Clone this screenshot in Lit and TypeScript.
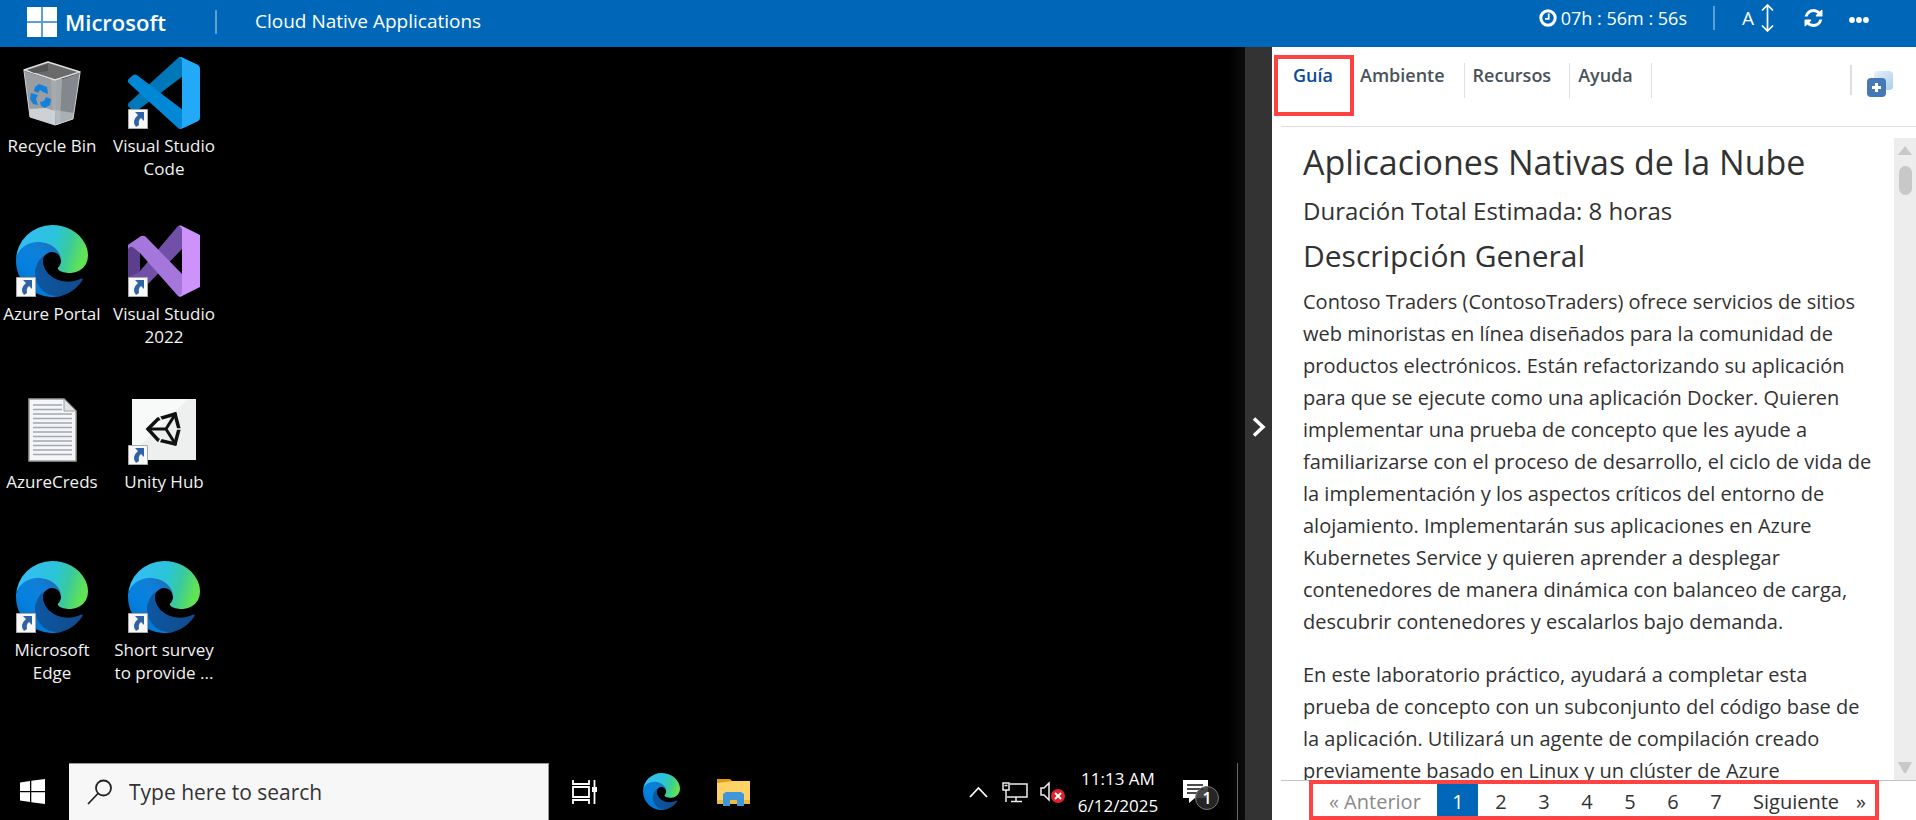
import { LitElement, html, css, svg, nothing } from "lit";
import { customElement, property, state } from "lit/decorators.js";
import { classMap } from "lit/directives/class-map.js";

const FONT = css`"Open Sans", "Noto Sans", sans-serif`;

@customElement("edge-logo")
class EdgeLogo extends LitElement {
  static styles = css`
    :host { display: block; }
    svg { display: block; width: 100%; height: 100%; }
  `;
  render() {
    return html`<svg viewBox="0 0 256 256" preserveAspectRatio="none" aria-hidden="true">
      <defs>
        <linearGradient id="navy" x1="63" y1="178" x2="241" y2="178" gradientUnits="userSpaceOnUse">
          <stop offset="0" stop-color="#0c59a4" /><stop offset="1" stop-color="#114a8b" />
        </linearGradient>
        <linearGradient id="blue" x1="157" y1="95" x2="46" y2="217" gradientUnits="userSpaceOnUse">
          <stop offset="0" stop-color="#1b6fc0" /><stop offset="0.25" stop-color="#0f7fd6" />
          <stop offset="0.7" stop-color="#0680e0" /><stop offset="1" stop-color="#0078d4" />
        </linearGradient>
        <linearGradient id="green" x1="20" y1="60" x2="240" y2="130" gradientUnits="userSpaceOnUse">
          <stop offset="0" stop-color="#35bdf6" /><stop offset="0.5" stop-color="#2ac4d8" />
          <stop offset="0.75" stop-color="#3acb9a" /><stop offset="1" stop-color="#62e352" />
        </linearGradient>
      </defs>
      <g transform="translate(-4.63 -4.92)">
        <path fill="url(#navy)" d="M235.68 195.46a93.73 93.73 0 0 1-10.54 4.71 101.87 101.87 0 0 1-35.9 6.46c-47.32 0-88.54-32.55-88.54-74.32A31.48 31.48 0 0 1 117.13 105c-42.8 1.8-53.8 46.4-53.8 72.53 0 73.88 68.09 81.37 82.76 81.37 7.91 0 19.84-2.3 27-4.56l1.31-.44a128.34 128.34 0 0 0 66.6-52.8 4 4 0 0 0-5.32-5.64Z" />
        <path fill="url(#blue)" d="M110.34 246.34A79.2 79.2 0 0 1 87.6 225a80.72 80.72 0 0 1 29.53-120c3.12-1.47 8.45-4.13 15.54-4a32.35 32.35 0 0 1 25.69 13 31.88 31.88 0 0 1 6.36 18.66c0-.21 24.46-79.6-80-79.6-43.9 0-80 41.66-80 78.21a130.15 130.15 0 0 0 12.11 56 128 128 0 0 0 156.38 67.11 75.55 75.55 0 0 1-62.78-8Z" />
        <path fill="url(#green)" d="M156.94 153.78c-.81 1.05-3.3 2.5-3.3 5.66 0 2.61 1.7 5.12 4.72 7.23 14.38 10 41.49 8.68 41.56 8.68a59.56 59.56 0 0 0 30.27-8.35 61.38 61.38 0 0 0 30.43-52.88c.26-22.41-8-37.31-11.34-43.91C228.09 28.76 182.35 4.92 132.61 4.92a128 128 0 0 0-128 126.2c.48-36.54 36.8-66.05 80-66.05 3.5 0 23.46.34 42 10.07 16.34 8.58 24.9 18.94 30.85 29.21 6.18 10.67 7.28 24.15 7.28 29.52s-2.74 13.33-7.8 19.91Z" />
      </g>
    </svg>`;
  }
}

@customElement("lab-header")
class LabHeader extends LitElement {
  static styles = css`
    :host {
      display: flex; align-items: flex-start; box-sizing: border-box; height: 47px;
      background: #0067b8; color: #fff; font-family: ${FONT};
    }
    svg { display: block; }
    button { display: block; border: 0; margin: 0; padding: 0; background: none; color: inherit; font: inherit; cursor: pointer; }
    .brand { display: flex; align-items: center; gap: 8px; margin: 7px 0 0 27px; height: 30px; width: 188px; }
    .wordmark { font-size: 22px; line-height: 30px; font-weight: 600; }
    .bar { width: 2px; height: 24px; background: #5c9fd2; margin-top: 10px; }
    .title { font-size: 19px; line-height: 42px; font-weight: 400; margin: 0 auto 0 38px; white-space: nowrap; }
    .tools { display: flex; align-items: center; height: 36px; padding-right: 47px; }
    .timer { display: flex; align-items: center; gap: 4px; font-size: 18px; white-space: nowrap; }
    .tools .bar { margin: 0 27px 0 26px; }
    .size { display: flex; align-items: center; gap: 7px; font-size: 19px; }
    .refresh { margin-left: 30px; }
    .more { margin: 4px 0 0 26px; }
  `;
  render() {
    return html`
      <div class="brand">
        <svg width="30" height="30" viewBox="0 0 30 30" aria-hidden="true">
          <path fill="#5c9fd2" d="M0 14h30v2H0zM14 0h2v30h-2z" />
          <path fill="#fff" d="M0 0h14v14H0zM16 0h14v14H16zM0 16h14v14H0zM16 16h14v14H16z" />
        </svg>
        <span class="wordmark">Microsoft</span>
      </div>
      <span class="bar"></span>
      <h1 class="title">Cloud Native Applications</h1>
      <div class="tools">
        <div class="timer">
          <svg width="18" height="18" viewBox="0 0 18 18" fill="none" stroke="#fff" aria-hidden="true">
            <circle cx="9" cy="9" r="7.2" stroke-width="3" /><path d="M9.7 4.5v5.3H6" stroke-width="1.8" />
          </svg>
          <span>07h : 56m : 56s</span>
        </div>
        <span class="bar"></span>
        <button class="size" aria-label="Tamaño del texto">
          <span>A</span>
          <svg width="13" height="28" viewBox="0 0 13 28" fill="none" stroke="#fff" stroke-width="1.7" aria-hidden="true">
            <path d="M6.5 1v26M1 6.5l5.5-5.5L12 6.5M1 21.5l5.5 5.5 5.5-5.5" />
          </svg>
        </button>
        <button class="refresh" aria-label="Actualizar">
          <svg width="19" height="18" viewBox="0 0 1536 1536" fill="#fff" aria-hidden="true">
            <path d="M1511 928q0 5-1 7-64 268-268 434.500T764 1536q-146 0-282.500-55T238 1324l-129 129q-19 19-45 19t-45-19-19-45V960q0-26 19-45t45-19h448q26 0 45 19t19 45-19 45l-137 137q71 66 161 102t187 36q134 0 250-65t186-179q11-17 53-117 8-23 30-23h192q13 0 22.500 9.500t9.500 22.500zm25-800v448q0 26-19 45t-45 19h-448q-26 0-45-19t-19-45 19-45l138-138Q969 256 768 256q-134 0-250 65T332 500q-11 17-53 117-8 23-30 23H50q-13 0-22.500-9.500T18 608v-7q65-268 270-434.500T768 0q146 0 284 55.500T1297 212l130-129q19-19 45-19t45 19 19 45z" />
          </svg>
        </button>
        <button class="more" aria-label="Más opciones">
          <svg width="20" height="6" viewBox="0 0 20 6" fill="#fff" aria-hidden="true">
            <circle cx="3" cy="3" r="2.9" /><circle cx="10" cy="3" r="2.9" /><circle cx="17" cy="3" r="2.9" />
          </svg>
        </button>
      </div>`;
  }
}

const recycleBin = svg`
  <path fill="#9a9da2" d="M8 14L40 24L40 68L14 60Z" />
  <path fill="#84878d" d="M40 24L64 16L57 62L40 68Z" />
  <path fill="#a9b0b2" d="M35 22L46 22L44 67L37 68Z" opacity=".8" />
  <path fill="#dadfe2" d="M13 52L30 51L39 54L39 68L14 60Z" opacity=".8" />
  <path fill="#b9c2c4" d="M39 53L58 56L57 62L40 68Z" opacity=".7" />
  <path fill="#6a6a6a" stroke="#dcdedf" stroke-width="1.6" stroke-linejoin="round" d="M8 13L32 5L64 15L39 23Z" />
  <path fill="#555" d="M12 13L32 7V14L18 16Z" />
  <path fill="none" stroke="#cfd2d4" stroke-width="1" d="M8 14L14 60L39 68L57 62L64 16" />
  <path fill="#1380dc" d="M19 30L23 27L31 30L32 37L27 35L24 33L22 36L18 34ZM15 36L22 38L20 42L22 48L17 47L14 42ZM30 40L35 42L34 48L29 51L25 49L24 45L28 44Z" />`;

const vscode = svg`<g transform="scale(.72)">
  <path fill="#0077b9" d="M96.4614 10.7962L75.8569 .8755C73.4719-.2728 70.6217.2116 68.75 2.0833L1.2986 63.5832C-.5157 65.2373-.5136 68.0937 1.3031 69.7452L6.8127 74.754C8.2979 76.1042 10.5347 76.2036 12.1338 74.9905L93.3609 13.3699C96.086 11.3026 100 13.2462 100 16.6667V16.4275C100 14.0265 98.6246 11.8378 96.4614 10.7962Z" />
  <path fill="#0088d6" d="M96.4614 89.2038L75.8569 99.1245C73.4719 100.273 70.6217 99.7884 68.75 97.9167L1.2986 36.4169C-.5157 34.7627-.5136 31.9063 1.3031 30.2548L6.8127 25.246C8.2979 23.8958 10.5347 23.7964 12.1338 25.0095L93.3609 86.6301C96.086 88.6974 100 86.7538 100 83.3333V83.5726C100 85.9735 98.6246 88.1622 96.4614 89.2038Z" />
  <path fill="#22a9f8" d="M75.8578 99.1263C73.4721 100.274 70.6219 99.7885 68.75 97.9166C71.0564 100.223 75 98.5895 75 95.3278V4.6721C75 1.4104 71.0564-.2231 68.75 2.0833C70.6219.2114 73.4721-.2737 75.8578.8736L96.4587 10.7807C98.6234 11.8217 100 14.0112 100 16.4132V83.5871C100 85.9891 98.6234 88.1786 96.4587 89.2196L75.8578 99.1263Z" />
</g>`;

const visualStudio = svg`
  <path fill="#5b3f8c" d="M0 20L4 17L12 27V46L0 54Z" />
  <path fill="#7350a8" d="M50 1Q52 0 54 1V24L21 58Q17 61 12 60L0 54V53L12 46Z" />
  <path fill="#a577dc" d="M0 20L13 11Q16 10 18 12L54 49V71Q52 72 50 71L12 28L6 23Q2 20 0 24Z" />
  <path fill="#cd93fb" d="M54 1L72 10V62L54 71Q52 72 51 71Q54 70 54 66V5Q54 2 51 1Q52 0 54 1Z" />`;

const textFile = svg`
  <path fill="#f4f6f9" stroke="#9aa09f" stroke-width="1.5" d="M13 6H48L60 18V68H13Z" />
  <path fill="#dfe3e6" stroke="#9aa09f" d="M48 6V18H60Z" />
  <path stroke="#a3a8ac" stroke-width="1.4" d="M17 12H46M17 16.500H46M17 21H56M17 25.500H56M17 30H56M17 34.500H56M17 39H56M17 43.500H56M17 48H56M17 52.500H56M17 57H56M17 61.500H56" />`;

const unityHub = svg`
  <path fill="#eef0ef" d="M4 6H68V67H4Z" />
  <path fill="#fff" opacity=".6" d="M4 6H60L4 60Z" />
  <path fill="none" stroke="#111" stroke-width="3.5" d="M20 36L30 26L47 21L51 36L47 51L30 47Z" />
  <path fill="none" stroke="#111" stroke-width="3" d="M19 36H39M48 20L38 36L48 52" />
  <path stroke="#f2f3f3" stroke-width="1.5" d="M31 23L34 28M31 49L34 44M49 36H53" />`;

const edge = "edge";
const shortcuts = [
  { label: "Recycle Bin", art: recycleBin, link: false },
  { label: "Visual Studio Code", art: vscode, link: true },
  { label: "Azure Portal", art: edge, link: true },
  { label: "Visual Studio 2022", art: visualStudio, link: true },
  { label: "AzureCreds", art: textFile, link: false },
  { label: "Unity Hub", art: unityHub, link: true },
  { label: "Microsoft Edge", art: edge, link: true },
  { label: "Short survey to provide ...", art: edge, link: true },
];

@customElement("remote-desktop")
class RemoteDesktop extends LitElement {
  static styles = css`
    :host {
      display: flex; flex-direction: column; justify-content: space-between; min-width: 0; min-height: 0; overflow: hidden;
      background: linear-gradient(to left, #0d0d0d, #000 16px); color: #fff; font-family: ${FONT};
    }
    svg { display: block; }
    button { display: block; border: 0; margin: 0; padding: 0; background: none; color: inherit; font: inherit; cursor: pointer; }
    .icons { display: grid; grid-template-columns: 104px 104px; column-gap: 8px; grid-auto-rows: 168px; padding-top: 10px; min-height: 0; }
    .icon { display: flex; flex-direction: column; align-items: center; gap: 5px; font-size: 17px; line-height: 23px; color: #f2f2f2; }
    .label { width: 112px; margin: 0 -4px; }
    .art { position: relative; width: 72px; height: 72px; }
    .art edge-logo { width: 72px; height: 72px; }
    .badge { position: absolute; left: 0; bottom: 0; }
    .taskbar { display: flex; flex: none; align-items: center; height: 57px; }
    .start { margin: 0 24px 0 20px; }
    .search { display: flex; align-items: center; gap: 16px; box-sizing: border-box; flex: 0 1 480px; height: 57px; padding-left: 18px; background: #f7f7f7; border: solid #999; border-width: 1px 1px 0 0; min-width: 0; }
    .search input { flex: 1; min-width: 0; border: 0; outline: 0; padding: 0; background: none; font: 21px/30px ${FONT}; color: #333; }
    .search input::placeholder { color: #333; opacity: 1; }
    .pinned { display: flex; align-items: center; padding-left: 23px; }
    .pinned edge-logo { width: 37px; height: 37px; }
    .edge { margin: 0 37px 0 45px; }
    .tray { display: flex; align-items: center; margin-left: auto; height: 57px; }
    .net { margin: 0 12px 0 14px; }
    .clock { width: 90px; margin: 0 20px 0 8px; text-align: center; font-size: 17px; line-height: 27px; white-space: nowrap; }
    .notes { position: relative; width: 36px; height: 36px; }
    .count { position: absolute; right: 0; bottom: 0; width: 22px; height: 22px; border: 1px solid #777; border-radius: 50%; background: #2b2b2bdd; font-size: 16px; line-height: 22px; font-weight: 600; text-align: center; }
    .peek { width: 1px; height: 57px; margin: 0 7px 0 18px; background: #666; }
  `;
  render() {
    return html`
      <div class="icons">
        ${shortcuts.map((s) => html`<button class="icon">
          <span class="art">
            ${s.art === edge
              ? html`<edge-logo></edge-logo>`
              : html`<svg width="72" height="72" viewBox="0 0 72 72" aria-hidden="true">${s.art}</svg>`}
            ${s.link
              ? html`<svg class="badge" width="20" height="20" viewBox="0 0 20 20" aria-hidden="true">
                  <path fill="#f8f8f8" stroke="#aaa" d="M.5.5h19v19H.500z" />
                  <path fill="#2f62a6" d="M7 3h9v9l-3-3q-3 2-2 7l-3 2q-5-6 2-12z" />
                </svg>`
              : nothing}
          </span>
          <span class="label">${s.label}</span>
        </button>`)}
      </div>
      <div class="taskbar">
        <button class="start" aria-label="Start">
          <svg width="25" height="25" viewBox="0 0 25 25" fill="#fff" aria-hidden="true">
            <path d="M0 3.500L10 2V12H0zM11.300 1.800L25 0V12H11.300zM0 13.200H10V23L0 21.500zM11.300 13.200H25V25L11.300 23.200z" />
          </svg>
        </button>
        <label class="search">
          <svg width="26" height="26" viewBox="0 0 26 26" fill="none" stroke="#222" stroke-width="1.8" aria-hidden="true">
            <circle cx="16.500" cy="9" r="7.500" /><path d="M11 14.500L1 25" />
          </svg>
          <input type="text" placeholder="Type here to search" aria-label="Type here to search" />
        </label>
        <div class="pinned">
          <button aria-label="Task View">
            <svg width="26" height="24" viewBox="0 0 26 24" fill="none" stroke="#fff" stroke-width="1.8" aria-hidden="true">
              <path d="M1 0V4H17V0M1 24V20H17V24M1 7H17V17H1ZM22.500 0V24" /><path fill="#fff" stroke="none" d="M20 7h5v5h-5z" />
            </svg>
          </button>
          <button class="edge" aria-label="Microsoft Edge"><edge-logo></edge-logo></button>
          <button aria-label="File Explorer">
            <svg width="33" height="28" viewBox="0 0 33 28" aria-hidden="true">
              <path fill="#e29c10" d="M0 1h13l3 3v4H0z" /><path fill="#fdd365" d="M0 5l15-2h18v23H0z" />
              <path fill="#eebc3c" d="M0 22h33v4H0z" /><path fill="#3f96d8" d="M6 28V16l3-2h15l3 2v12h-7v-6h-7v6z" />
            </svg>
          </button>
        </div>
        <div class="tray">
          <button aria-label="Show hidden icons">
            <svg width="19" height="12" viewBox="0 0 19 12" fill="none" stroke="#fff" stroke-width="1.800" aria-hidden="true"><path d="M1 11l8.500-9 8.500 9" /></svg>
          </button>
          <svg class="net" width="26" height="22" viewBox="0 0 26 22" fill="none" stroke="#eee" stroke-width="1.500" aria-hidden="true">
            <path d="M8 3H25V16H5M14 16V20M9 20.500H20M1 2H7V9H1ZM4 9V21M2.500 4.500H5.500" />
          </svg>
          <svg width="25" height="22" viewBox="0 0 25 22" aria-hidden="true">
            <path fill="none" stroke="#eee" stroke-width="1.500" d="M1 7H4L9 2V19L4 14H1Z" />
            <circle cx="18" cy="15" r="7" fill="#e0222c" /><path stroke="#fff" stroke-width="2" d="M15 12l6 6M21 12l-6 6" />
          </svg>
          <div class="clock"><div>11:13 AM</div><div>6/12/2025</div></div>
          <button class="notes" aria-label="Notifications">
            <svg width="25" height="24" viewBox="0 0 25 24" aria-hidden="true">
              <path fill="#fff" d="M0 0h25v18H12l-6 5v-5H0z" /><path stroke="#111" stroke-width="1.500" d="M4 5h16M4 9h16M4 13h10" />
            </svg>
            <span class="count">1</span>
          </button>
          <span class="peek"></span>
        </div>
      </div>`;
  }
}

@customElement("lab-guide")
class LabGuide extends LitElement {
  @property({ type: Number }) page = 1;
  @state() private tab = "Guía";

  static styles = css`
    :host { display: flex; flex-direction: column; min-width: 0; min-height: 0; background: #fff; color: #323232; font-family: ${FONT}; }
    svg { display: block; }
    button { display: block; border: 0; margin: 0; padding: 0; background: none; color: inherit; font: inherit; cursor: pointer; }
    .tabs { display: flex; align-items: flex-start; height: 71px; padding: 8px 23px 0 2px; }
    .tab { box-sizing: border-box; height: 35px; margin-top: 8px; padding: 0 18px 11px 8px; border-right: 1px solid #dcdfe3; font-size: 18px; line-height: 24px; font-weight: 600; color: #4a525a; }
    .tab.first { padding-left: 6px; padding-right: 19px; }
    .tab.current { height: 61px; margin-top: 0; width: 80px; padding: 4px 6px 33px 4px; border: 4px solid #ff4343; color: #0b4a9c; }
    .split { width: 2px; height: 30px; margin: 10px 15px 0 auto; background: #dcdfe3; }
    .add { margin-top: 16px; }
    .rule { height: 1px; margin-left: 9px; background: #dcdfe6; }
    .body { flex: 1; display: flex; min-height: 0; margin: 11px 0 0 9px; border-bottom: 1px solid #c4c4c4; }
    .text { flex: 1; min-width: 0; overflow: hidden; padding: 0 18px 0 22px; }
    h2, h3, h4, p { margin: 0; font-weight: 400; }
    h2 { font-size: 34px; line-height: 48px; }
    h4 { font-size: 24px; line-height: 34px; margin-top: 8px; }
    h3 { font-size: 30px; line-height: 40px; margin-top: 8px; }
    p { font-size: 20px; line-height: 32px; margin: 10px 0 21px; }
    .scroll { display: flex; flex-direction: column; align-items: center; width: 22px; background: #ededed; }
    .thumb { width: 13px; height: 29px; border-radius: 7px; background: #c8c8c8; margin: 11px 0 auto; }
    .up { margin-top: 8px; }
    .down { margin-bottom: 7px; }
    .pages { box-sizing: border-box; display: flex; align-items: stretch; justify-content: space-between; height: 40px; margin: -1px 37px 0; border: 4px solid #ff4343; position: relative; background: #fff; font-size: 20px; line-height: 36px; }
    .pages a { color: inherit; text-decoration: none; text-align: center; white-space: nowrap; }
    .nums { display: flex; gap: 2px; }
    .nums a { width: 41px; height: 32px; }
    .nums a.on { background: #0067b8; color: #fff; }
    .pages .prev { color: #8a8a8a; padding-left: 16px; }
    .pages .next { display: flex; gap: 17px; padding-right: 9px; }
  `;
  render() {
    const tabs = ["Guía", "Ambiente", "Recursos", "Ayuda"];
    return html`
      <nav class="tabs">
        ${tabs.map((t, i) => html`<button
          class=${classMap({ tab: true, first: i === 1, current: t === this.tab })}
          @click=${() => (this.tab = t)}>${t}</button>`)}
        <span class="split"></span>
        <button class="add" aria-label="Abrir en otra ventana">
          <svg width="26" height="26" viewBox="0 0 26 26" aria-hidden="true">
            <defs><linearGradient id="pane" x1="0" y1="0" x2="1" y2="1"><stop offset="0" stop-color="#e8f1f8" /><stop offset="1" stop-color="#abcdea" /></linearGradient></defs>
            <rect x="7" width="19" height="19" rx="4" fill="url(#pane)" />
            <rect y="7" width="19" height="19" rx="4" fill="#4479b5" />
            <path stroke="#fff" stroke-width="3" d="M9.500 12v9M5 16.500h9" />
          </svg>
        </button>
      </nav>
      <div class="rule"></div>
      <div class="body">
        <article class="text">
          <h2>Aplicaciones Nativas de la Nube</h2>
          <h4>Duración Total Estimada: 8 horas</h4>
          <h3>Descripción General</h3>
          <p>Contoso Traders (ContosoTraders) ofrece servicios de sitios web minoristas en línea diseñados para la comunidad de productos electrónicos. Están refactorizando su aplicación para que se ejecute como una aplicación Docker. Quieren implementar una prueba de concepto que les ayude a familiarizarse con el proceso de desarrollo, el ciclo de vida de la implementación y los aspectos críticos del entorno de alojamiento. Implementarán sus aplicaciones en Azure Kubernetes Service y quieren aprender a desplegar contenedores de manera dinámica con balanceo de carga, descubrir contenedores y escalarlos bajo demanda.</p>
          <p>En este laboratorio práctico, ayudará a completar esta prueba de concepto con un subconjunto del código base de la aplicación. Utilizará un agente de compilación creado previamente basado en Linux y un clúster de Azure</p>
        </article>
        <div class="scroll">
          <button class="up" aria-label="Subir"><svg width="14" height="9" viewBox="0 0 14 9"><path fill="#c8c8c8" d="M7 0l7 9H0z" /></svg></button>
          <span class="thumb"></span>
          <button class="down" aria-label="Bajar"><svg width="14" height="11" viewBox="0 0 14 11"><path fill="#c8c8c8" d="M0 0h14L8 11H6z" /></svg></button>
        </div>
      </div>
      <nav class="pages" aria-label="Páginas">
        <a class="prev" href="#">« Anterior</a>
        <span class="nums">
          ${[1, 2, 3, 4, 5, 6, 7].map((n) => html`<a href="#" class=${classMap({ on: n === this.page })}
            @click=${(e: Event) => { e.preventDefault(); this.page = n; }}>${n}</a>`)}
        </span>
        <a class="next" href="#"><span>Siguiente</span><span>»</span></a>
      </nav>`;
  }
}

@customElement("app-root")
class AppRoot extends LitElement {
  static styles = css`
    :host { display: flex; flex-direction: column; height: 100vh; overflow: hidden; }
    main { flex: 1; min-height: 0; display: grid; grid-template: minmax(0, 1fr) / 1245fr 27px 644fr; }
    .splitter { display: flex; align-items: center; justify-content: center; border: 0; padding: 0 0 14px; background: #333; cursor: pointer; }
  `;
  render() {
    return html`
      <lab-header></lab-header>
      <main>
        <remote-desktop></remote-desktop>
        <button class="splitter" aria-label="Contraer panel">
          <svg width="14" height="20" viewBox="0 0 14 20" fill="none" stroke="#fff" stroke-width="3.500" aria-hidden="true"><path d="M2 1.500l9 8.500-9 8.500" /></svg>
        </button>
        <lab-guide></lab-guide>
      </main>`;
  }
}
